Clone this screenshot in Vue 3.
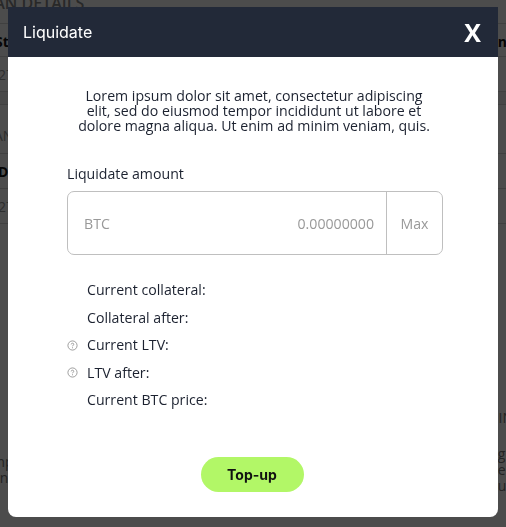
<script setup>
import { ref } from 'vue';

const amount = ref('');

const details = [
  { label: 'Current collateral:', help: false },
  { label: 'Collateral after:', help: false },
  { label: 'Current LTV:', help: true },
  { label: 'LTV after:', help: true },
  { label: 'Current BTC price:', help: false }
];
</script>

<template>
  <div class="page">
    <div class="page-title">LOAN DETAILS</div>
    <div class="page-row strong first"><span>St</span><span>An</span></div>
    <div class="page-row"><span>27</span></div>
    <div class="page-gap"></div>
    <div class="page-row tall"><span class="page-cut">AN</span></div>
    <div class="page-row strong"><span>D</span></div>
    <div class="page-row"><span>27</span></div>
    <div class="page-side">IN</div>
    <div class="page-notes">
      <div class="notes-left">
        <p>mp</p>
        <p>en</p>
        <p>ll</p>
      </div>
      <div class="notes-right">
        <p>gu</p>
        <p>ec</p>
        <p>ul</p>
      </div>
    </div>
  </div>

  <div class="overlay">
    <div class="modal">
      <div class="modal-header">
        <span class="modal-title">Liquidate</span>
        <button class="close-button">X</button>
      </div>

      <div class="modal-body">
        <p class="intro">
          Lorem ipsum dolor sit amet, consectetur adipiscing<br />
          elit, sed do eiusmod tempor incididunt ut labore et<br />
          dolore magna aliqua. Ut enim ad minim veniam, quis.
        </p>

        <label class="amount-label">Liquidate amount</label>
        <div class="amount-box">
          <span class="currency">BTC</span>
          <input v-model="amount" type="text" placeholder="0.00000000" />
          <button class="max-button">Max</button>
        </div>

        <ul class="details">
          <li v-for="item in details" :key="item.label">
            <svg v-if="item.help" class="help" viewBox="0 0 12 12" width="11" height="11">
              <circle cx="6" cy="6" r="5" fill="none" stroke="#8a8a8a" stroke-width="0.9" />
              <path d="M4.6 4.8C4.6 4 5.2 3.5 6 3.5S7.4 4 7.4 4.7C7.4 5.7 6 5.7 6 6.9" fill="none" stroke="#8a8a8a" stroke-width="0.9" />
              <circle cx="6" cy="8.5" r="0.6" fill="#8a8a8a" />
            </svg>
            {{ item.label }}
          </li>
        </ul>

        <button class="topup-button">Top-up</button>
      </div>
    </div>
  </div>
</template>

<style>
body {
  margin: 0;
  background: #ffffff;
}
</style>

<style scoped>
.page {
  height: 527px;
  overflow: hidden;
  font-family: "Open Sans", sans-serif;
  font-size: 14px;
  color: #999999;
}

.page-title {
  height: 17px;
  padding-top: 6px;
  margin-top: -12px;
  margin-left: -27px;
  margin-bottom: 12px;
  font-size: 16px;
  font-weight: 600;
  line-height: 18px;
  color: #888888;
}

.page-row {
  height: 34px;
  display: flex;
  align-items: center;
  justify-content: space-between;
  border-bottom: 1px solid #d8d8d8;
  margin-left: -2px;
}

.page-row.strong {
  font-weight: 700;
  color: #111111;
}

.page-row.first {
  border-top: 1px solid #d8d8d8;
  margin-left: -5px;
  margin-right: -1px;
  padding-top: 3px;
  box-sizing: border-box;
}

.page-gap {
  height: 12px;
  margin-bottom: 12px;
  background: #f0f0f0;
  border-bottom: 1px solid #d8d8d8;
}

.page-row.tall {
  height: 36px;
  margin-left: 0;
}

.page-cut {
  margin-left: -6px;
}

.page-side {
  margin-top: 184px;
  margin-right: -7px;
  text-align: right;
  line-height: 19px;
  color: #777777;
}

.page-notes {
  display: flex;
  justify-content: space-between;
  margin: 18px -8px 0;
  color: #777777;
}

.notes-left {
  padding-top: 9px;
}

.notes-right {
  padding-top: 1px;
}

.page-notes p {
  margin: 0;
  height: 16px;
  line-height: 16px;
}

.overlay {
  position: fixed;
  inset: 0;
  display: flex;
  justify-content: center;
  align-items: flex-start;
  padding-top: 7px;
  box-sizing: border-box;
  background: rgba(0, 0, 0, 0.7);
}

.modal {
  width: 490px;
  height: 510px;
  background: #ffffff;
  border-radius: 0 0 8px 8px;
  overflow: hidden;
  display: flex;
  flex-direction: column;
}

.modal-header {
  height: 50px;
  flex-shrink: 0;
  display: flex;
  align-items: center;
  justify-content: space-between;
  padding: 0 17px 0 15px;
  background: #222938;
}

.modal-title {
  font-family: Inter, sans-serif;
  font-size: 16px;
  color: #ffffff;
}

.close-button {
  padding: 0;
  border: none;
  background: none;
  font-family: "Open Sans", sans-serif;
  font-size: 25px;
  font-weight: 700;
  line-height: 50px;
  color: #ffffff;
}

.modal-body {
  flex: 1;
  display: flex;
  flex-direction: column;
  padding: 31px 55px 0 59px;
  font-family: "Open Sans", sans-serif;
  font-size: 14.15px;
  color: #1c2230;
}

.intro {
  margin: 0 2px 31px 0;
  text-align: center;
  line-height: 15px;
}

.amount-label {
  line-height: 20px;
  margin-bottom: 7px;
}

.amount-box {
  height: 64px;
  display: flex;
  align-items: center;
  box-sizing: border-box;
  border: 1px solid #bfbfbf;
  border-radius: 7px;
  color: #999999;
}

.currency {
  padding-left: 16px;
}

.amount-box input {
  flex: 1;
  min-width: 0;
  height: 100%;
  padding: 0 12px 0 0;
  border: none;
  outline: none;
  background: transparent;
  text-align: right;
  font-family: inherit;
  font-size: 14.15px;
}

.amount-box input::placeholder {
  color: #999999;
  opacity: 1;
}

.max-button {
  width: 56px;
  height: 100%;
  padding: 0;
  border: none;
  border-left: 1px solid #bfbfbf;
  background: none;
  font-family: inherit;
  font-size: 14.15px;
  color: #999999;
}

.details {
  list-style: none;
  margin: 21px 0 0;
  padding: 0 0 0 20px;
}

.details li {
  position: relative;
  height: 27.5px;
  line-height: 27.5px;
}

.help {
  position: absolute;
  left: -20px;
  top: 8.5px;
}

.topup-button {
  align-self: center;
  width: 103px;
  height: 35px;
  margin-top: 43px;
  margin-right: 6px;
  border: none;
  border-radius: 18px;
  background: #b2f767;
  font-family: Inter, sans-serif;
  font-size: 14px;
  font-weight: 700;
  color: #111111;
}
</style>
